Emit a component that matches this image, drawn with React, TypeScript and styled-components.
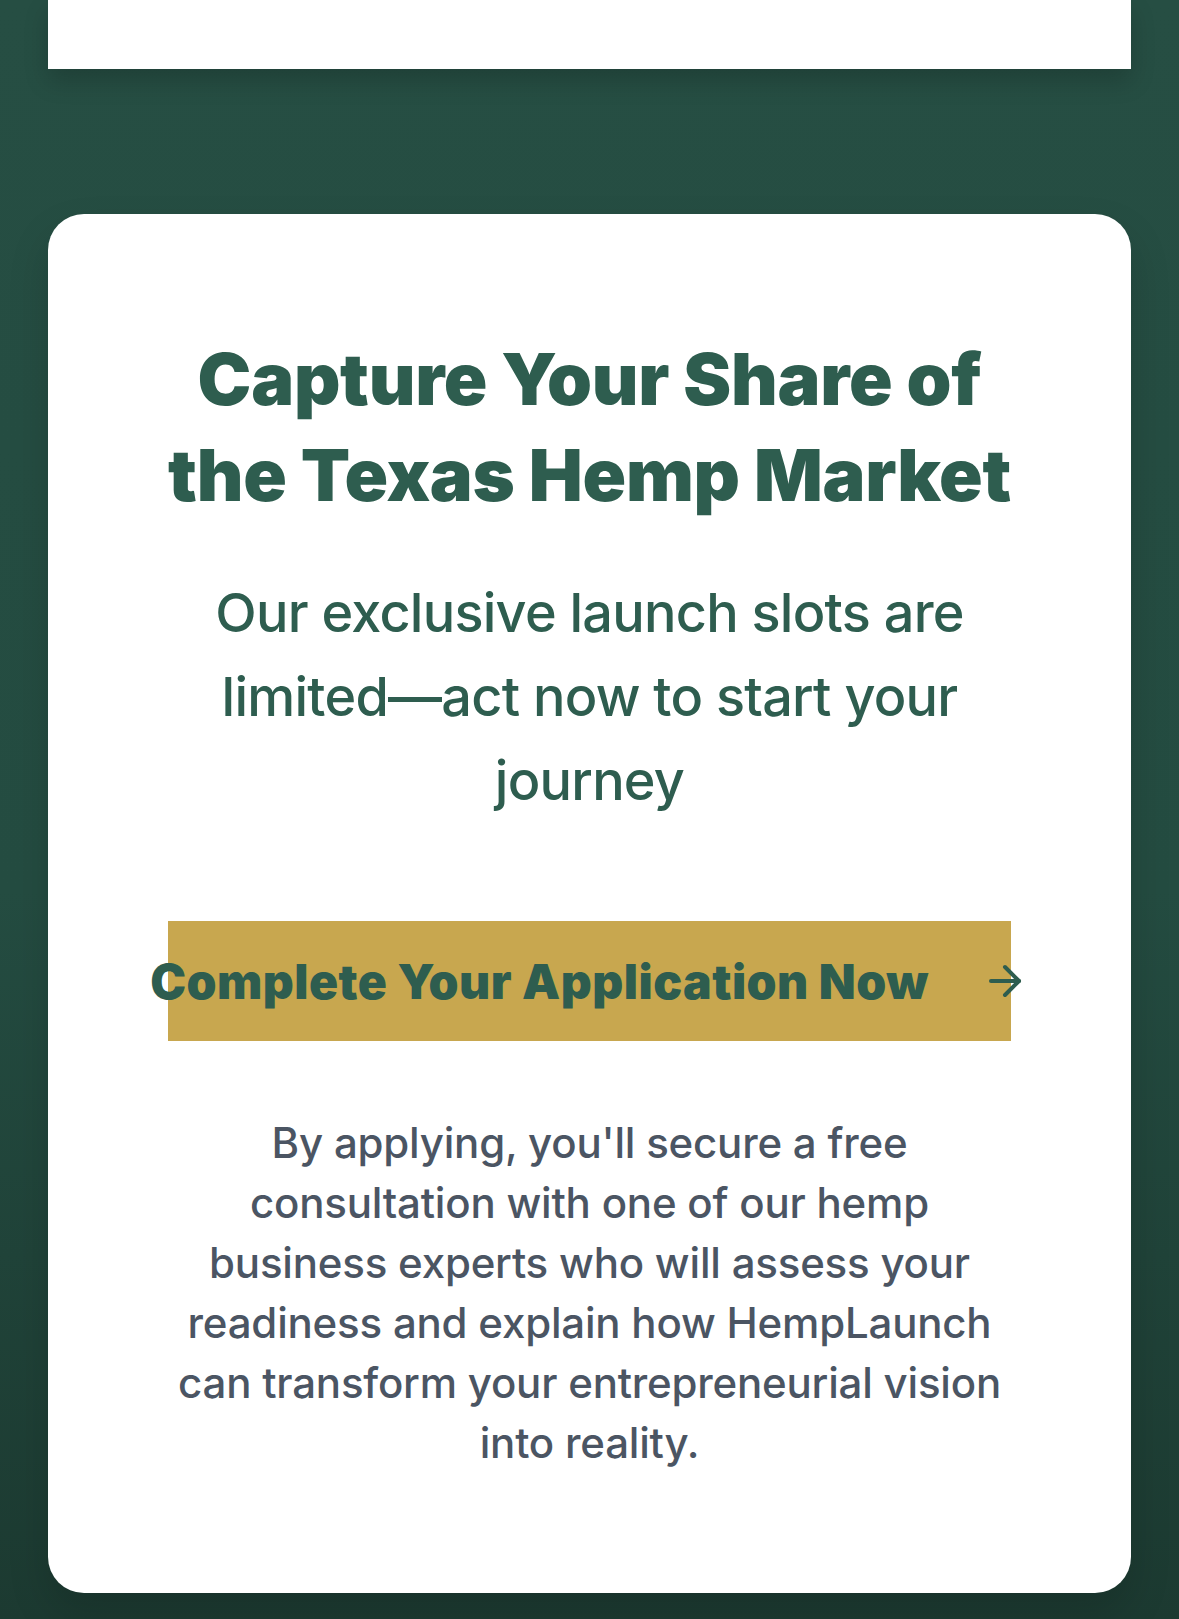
import React from "react";
import styled, { createGlobalStyle } from "styled-components";
import { ArrowRight } from "lucide-react";

const GlobalStyle = createGlobalStyle`
  html, body {
    margin: 0;
    padding: 0;
  }
  body {
    background: linear-gradient(180deg, #264e43 0%, #244c41 55%, #1c3a31 100%);
    min-height: 1619px;
    font-family: Inter, "Noto Sans", sans-serif;
    -webkit-font-smoothing: antialiased;
  }
`;

const Page = styled.main`
  box-sizing: border-box;
  width: 1179px;
  min-height: 1619px;
  padding: 0 48px;
  display: flex;
  flex-direction: column;
`;

const TopPanel = styled.div`
  height: 69px;
  background: #ffffff;
  box-shadow: 0 12px 24px rgba(0, 0, 0, 0.18);
  margin-bottom: 145px;
`;

const Card = styled.section`
  box-sizing: border-box;
  background: #ffffff;
  border-radius: 36px;
  padding: 117px 110px 120px;
  display: flex;
  flex-direction: column;
  align-items: center;
  text-align: center;
  box-shadow: 0 20px 40px rgba(0, 0, 0, 0.15);
`;

const Heading = styled.h2`
  margin: 0;
  font-family: Inter, sans-serif;
  font-weight: 900;
  font-size: 72px;
  line-height: 96px;
  letter-spacing: -0.25px;
  color: #2e5d4f;
`;

const Subheading = styled.p`
  margin: 48px 0 0;
  max-width: 780px;
  font-family: Inter, sans-serif;
  font-weight: 500;
  font-size: 54px;
  line-height: 84px;
  letter-spacing: -0.75px;
  color: #2e5d4f;
`;

const CtaButton = styled.a`
  box-sizing: border-box;
  margin-top: 98px;
  width: 843px;
  height: 120px;
  background: #c8a74f;
  display: flex;
  align-items: center;
  justify-content: center;
  gap: 52px;
  color: #2e5d4f;
  text-decoration: none;
  font-family: Inter, sans-serif;
  font-weight: 900;
  font-size: 48px;
  letter-spacing: 0.5px;
  white-space: nowrap;
  cursor: pointer;
  svg {
    flex-shrink: 0;
  }
`;

const Note = styled.p`
  margin: 72px 0 0;
  max-width: 843px;
  font-family: Inter, sans-serif;
  font-weight: 500;
  font-size: 42px;
  line-height: 60px;
  letter-spacing: -0.2px;
  color: #4b5563;
`;

export default function App() {
  return (
    <>
      <GlobalStyle />
      <Page>
        <TopPanel />
        <Card>
          <Heading>
            Capture Your Share of
            <br />
            the Texas Hemp Market
          </Heading>
          <Subheading>
            Our exclusive launch slots are limited—act now to start your journey
          </Subheading>
          <CtaButton>
            <span>Complete Your Application Now</span>
            <ArrowRight size={48} strokeWidth={2} />
          </CtaButton>
          <Note>
            By applying, you'll secure a free consultation with one of our hemp
            business experts who will assess your readiness and explain how
            HempLaunch can transform your entrepreneurial vision into reality.
          </Note>
        </Card>
      </Page>
    </>
  );
}
